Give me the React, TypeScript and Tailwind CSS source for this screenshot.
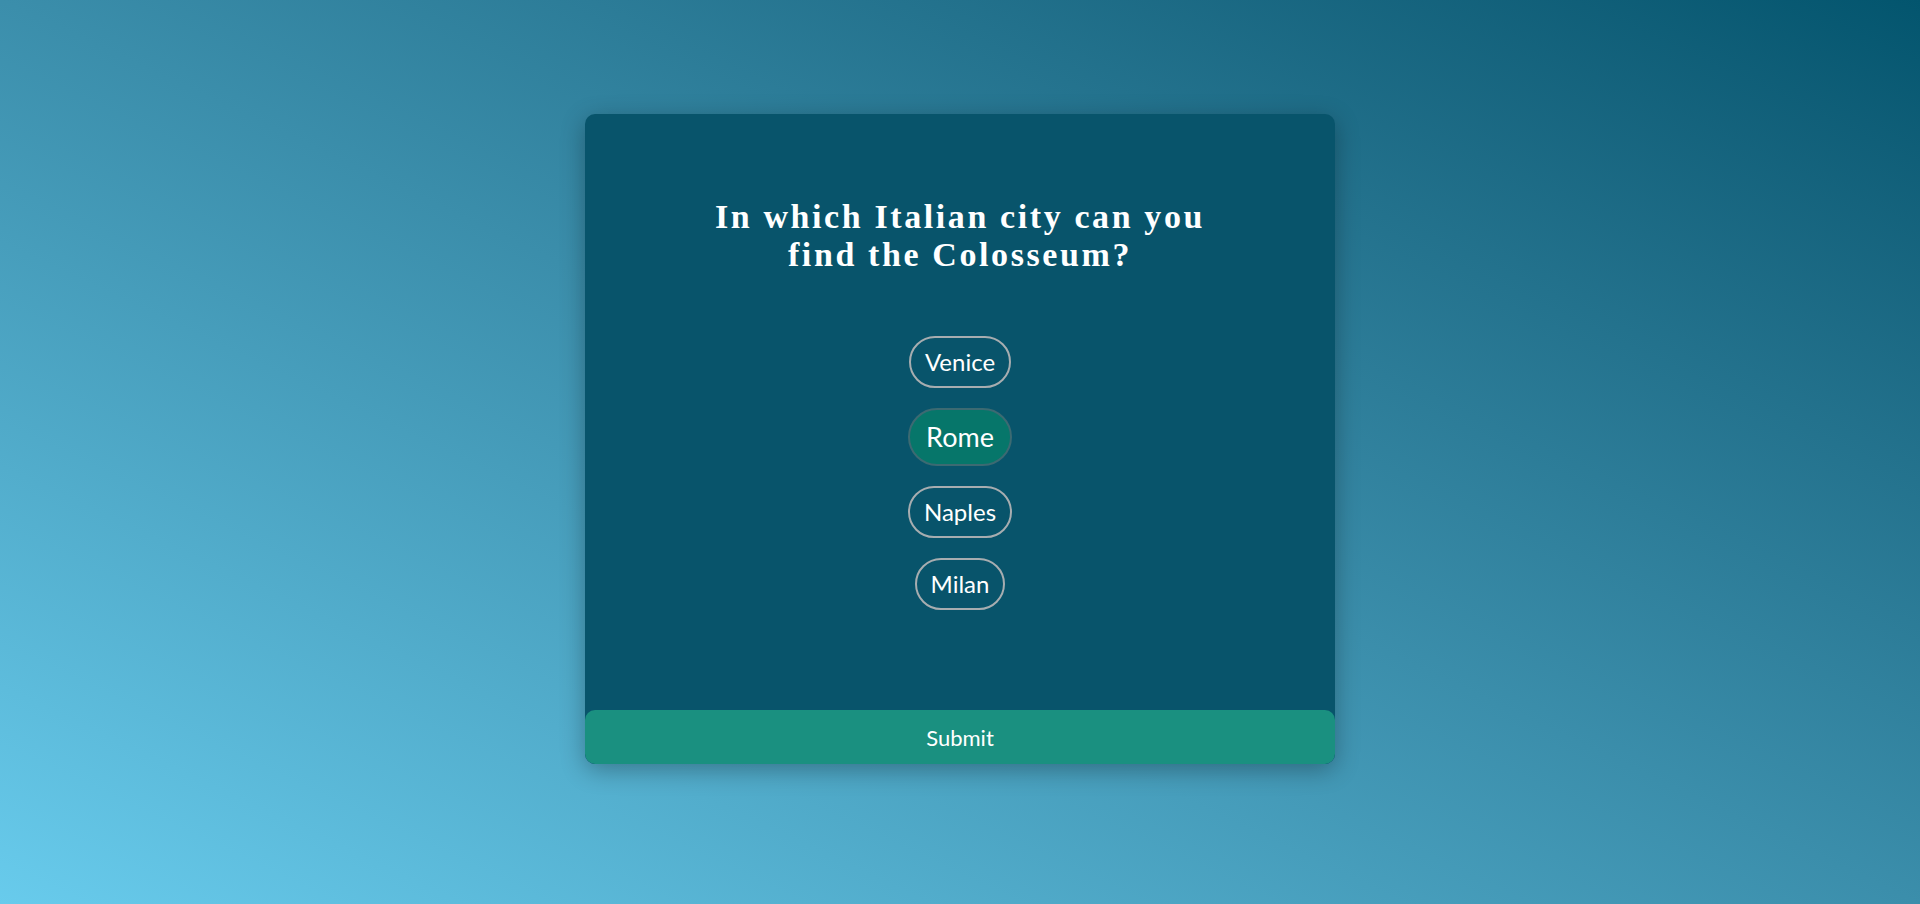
import React, { useState } from 'react';

const options = ['Venice', 'Rome', 'Naples', 'Milan'];

export default function App() {
  const [selected, setSelected] = useState('Rome');

  return (
    <div className="min-h-screen w-full flex items-start justify-center bg-gradient-to-tr from-[#68cbec] via-[#3b8eab] to-[#03556e] pt-[114px]">
      {/* Quiz card */}
      <div className="w-[750px] h-[650px] bg-[#08546b] rounded-[10px] shadow-[0_6px_24px_rgba(0,0,0,0.3)] flex flex-col overflow-hidden">
        <h1
          className="pt-[84px] text-center text-white font-bold text-[34px] leading-[38px] tracking-[2.6px]"
          style={{ fontFamily: '"Liberation Serif", "DejaVu Serif", serif' }}
        >
          In which Italian city can you
          <br />
          find the Colosseum?
        </h1>

        <div className="flex flex-col items-center gap-[20px] mt-[62px]" style={{ fontFamily: 'Lato, "Noto Sans", sans-serif' }}>
          {options.map((opt) => {
            const active = selected === opt;
            return (
              <button
                key={opt}
                onClick={() => setSelected(opt)}
                className={
                  active
                    ? 'h-[58px] px-[16px] rounded-full border-2 border-[#3c6a72] bg-[#06766a] text-white text-[27px]'
                    : 'h-[52px] px-[14px] rounded-full border-2 border-[#a7adb0] text-white text-[24px]'
                }
              >
                {opt}
              </button>
            );
          })}
        </div>

        <button
          className="mt-auto h-[54px] w-full rounded-[10px] bg-[#1a9080] text-white text-[22px]"
          style={{ fontFamily: 'Lato, "Noto Sans", sans-serif' }}
        >
          Submit
        </button>
      </div>
    </div>
  );
}
